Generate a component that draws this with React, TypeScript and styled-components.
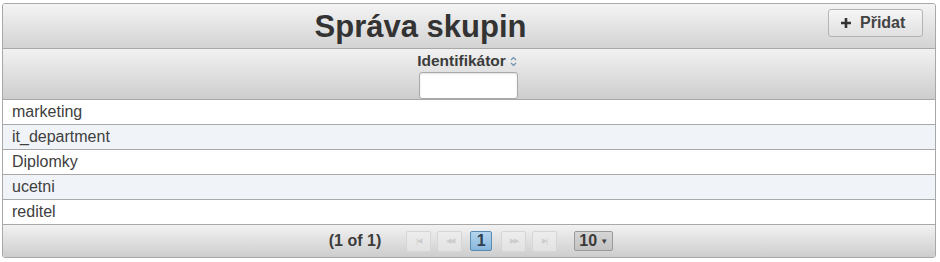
import styled, { createGlobalStyle } from "styled-components";

const GlobalStyle = createGlobalStyle`
  body {
    margin: 0;
    padding: 3px 0 0 2px;
    background: #ffffff;
    font-family: "Liberation Sans", Arial, sans-serif;
    color: #333333;
  }
`;

const Panel = styled.div`
  width: 934px;
  box-sizing: border-box;
  border: 1px solid #a8a8a8;
  border-radius: 3px;
  overflow: hidden;
`;

const TitleBar = styled.div`
  height: 45px;
  display: flex;
  align-items: center;
  background: linear-gradient(#f4f4f4, #d3d3d3);
  border-bottom: 1px solid #a8a8a8;
  padding: 0 12px 0 0;
  box-sizing: border-box;
`;

const Title = styled.h1`
  flex: 1;
  margin: 0;
  padding-left: 10px;
  text-align: center;
  font-size: 31px;
  font-weight: bold;
  color: #333333;
  line-height: 45px;
`;

const AddButton = styled.button`
  display: flex;
  align-items: center;
  gap: 8px;
  height: 28px;
  width: 95px;
  margin-top: -6px;
  padding: 0 0 0 11px;
  box-sizing: border-box;
  border: 1px solid #b4b4b4;
  border-radius: 3px;
  background: linear-gradient(#f6f6f6, #e0e0e0);
  font-family: "Liberation Sans", Arial, sans-serif;
  font-size: 16px;
  font-weight: bold;
  color: #444444;
`;

const ColumnHeader = styled.div`
  height: 51px;
  display: flex;
  flex-direction: column;
  align-items: center;
  padding-top: 3px;
  box-sizing: border-box;
  background: linear-gradient(#f2f2f2, #cdcdcd);
  border-bottom: 1px solid #a8a8a8;
`;

const HeaderLabel = styled.div`
  display: flex;
  align-items: center;
  gap: 4px;
  font-size: 15.5px;
  font-weight: bold;
  color: #3c3c3c;
  padding-right: 4px;
  line-height: 18px;
`;

const FilterInput = styled.input`
  width: 99px;
  height: 27px;
  margin: 2px 2px 0 0;
  box-sizing: border-box;
  border: 1px solid #a9a9a9;
  border-radius: 3px;
  background: #ffffff;
  box-shadow: inset 0 1px 2px rgba(0, 0, 0, 0.12);
`;

const Row = styled.div<{ $alt?: boolean }>`
  height: 25px;
  box-sizing: border-box;
  padding-left: 9px;
  font-size: 16px;
  line-height: 24px;
  color: #404040;
  background: ${(p) => (p.$alt ? "#f0f4f8" : "#ffffff")};
  border-bottom: 1px solid #a8a8a8;
`;

const Footer = styled.div`
  height: 32px;
  display: flex;
  align-items: center;
  justify-content: center;
  background: linear-gradient(#f2f2f2, #cdcdcd);
`;

const PageInfo = styled.span`
  font-size: 16px;
  font-weight: bold;
  color: #3c3c3c;
  margin-right: 25px;
  margin-left: 4px;
`;

const NavButton = styled.span`
  width: 25px;
  height: 21px;
  margin-right: 6px;
  box-sizing: border-box;
  display: flex;
  align-items: center;
  justify-content: center;
  border: 1px solid #d6d6d6;
  border-radius: 2px;
  background: linear-gradient(#ededed, #e2e2e2);
  color: #cccccc;
  font-size: 7px;
  letter-spacing: -1px;
`;

const PageNumber = styled.span`
  width: 22px;
  height: 20px;
  margin: 0 9px 0 2px;
  box-sizing: border-box;
  display: flex;
  align-items: center;
  justify-content: center;
  border: 1px solid #5a8cb3;
  border-radius: 2px;
  background: linear-gradient(#b6d6ee, #86b6dc);
  font-size: 16px;
  font-weight: bold;
  color: #2e3e4e;
`;

const PageSize = styled.span`
  margin-left: 11px;
  width: 39px;
  height: 20px;
  box-sizing: border-box;
  display: flex;
  align-items: center;
  justify-content: center;
  gap: 3px;
  border: 1px solid #9a9a9a;
  border-radius: 2px;
  background: linear-gradient(#d6d6d6, #c2c2c2);
  font-size: 16px;
  font-weight: bold;
  color: #3a3a3a;
`;

const Caret = styled.span`
  font-size: 8px;
  color: #444444;
`;

function SortIcon() {
  return (
    <svg width="7" height="11" viewBox="0 0 7 11">
      <path d="M1 4 L3.5 1.5 L6 4" fill="none" stroke="#6d8fb0" strokeWidth="1.2" />
      <path d="M1 7 L3.5 9.5 L6 7" fill="none" stroke="#6d8fb0" strokeWidth="1.2" />
    </svg>
  );
}

function PlusIcon() {
  return (
    <svg width="12" height="12" viewBox="0 0 12 12">
      <path d="M6 1 V11 M1 6 H11" stroke="#333333" strokeWidth="2.6" />
    </svg>
  );
}

const groups = ["marketing", "it_department", "Diplomky", "ucetni", "reditel"];

export default function App() {
  return (
    <>
      <GlobalStyle />
      <Panel>
        <TitleBar>
          <Title>Správa skupin</Title>
          <AddButton>
            <PlusIcon />
            Přidat
          </AddButton>
        </TitleBar>
        <ColumnHeader>
          <HeaderLabel>
            Identifikátor
            <SortIcon />
          </HeaderLabel>
          <FilterInput />
        </ColumnHeader>
        {groups.map((g, i) => (
          <Row key={g} $alt={i % 2 === 1}>
            {g}
          </Row>
        ))}
        <Footer>
          <PageInfo>(1 of 1)</PageInfo>
          <NavButton>|◀</NavButton>
          <NavButton>◀◀</NavButton>
          <PageNumber>1</PageNumber>
          <NavButton>▶▶</NavButton>
          <NavButton>▶|</NavButton>
          <PageSize>
            10<Caret>▼</Caret>
          </PageSize>
        </Footer>
      </Panel>
    </>
  );
}
